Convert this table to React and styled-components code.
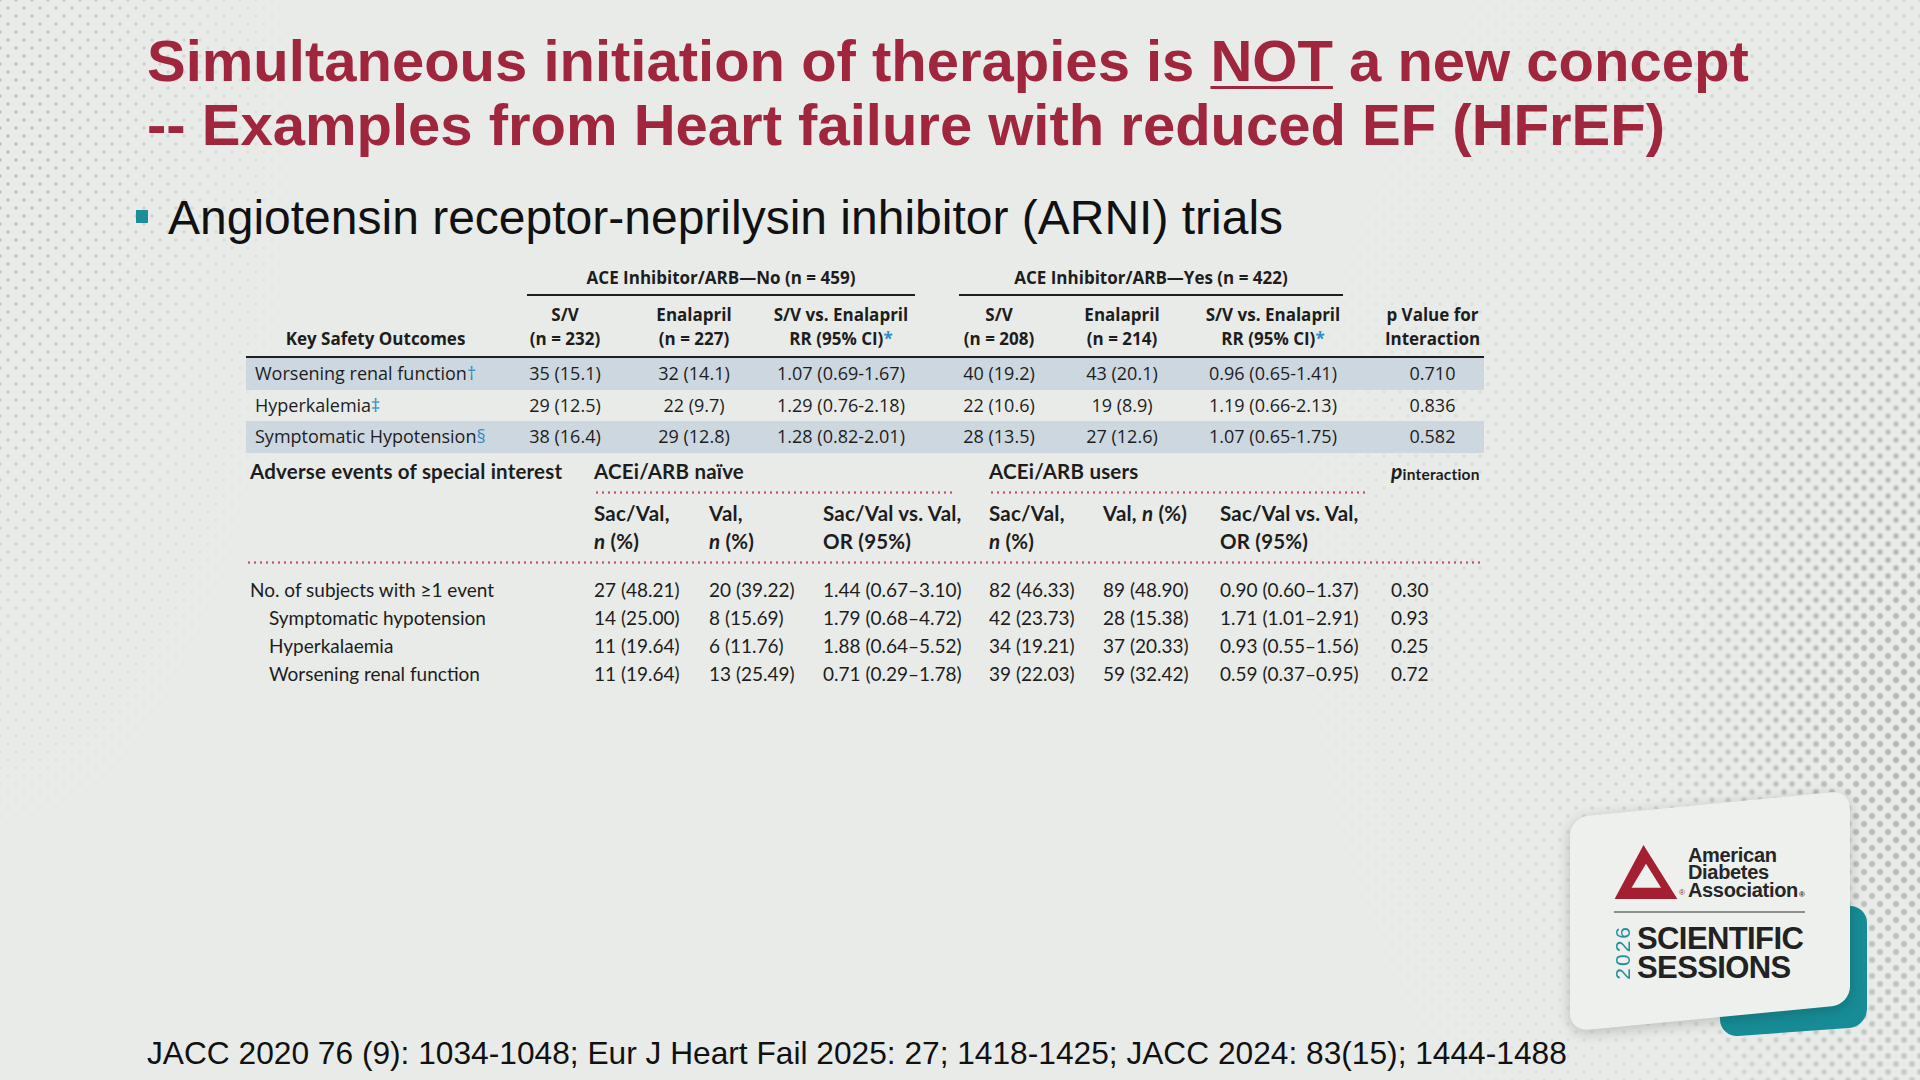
import React from 'react'
import styled, { createGlobalStyle } from 'styled-components'

const Global = createGlobalStyle`
  html, body {
    margin: 0;
    padding: 0;
    background: #e8ebe8;
  }
`

const lattice = (color, r) => `
  radial-gradient(circle, ${color} ${r}px, transparent ${r + 0.8}px),
  radial-gradient(circle, ${color} ${r}px, transparent ${r + 0.8}px)`

const Slide = styled.div`
  position: relative;
  width: 1920px;
  height: 1080px;
  overflow: hidden;
  background: #e8ebe8;
  font-family: "Liberation Sans", Arial, sans-serif;
`

const Halftone = styled.div`
  position: absolute;
  inset: 0;
  pointer-events: none;
  background-image: ${({ $dot, $r }) => lattice($dot, $r)};
  background-size: 16px 16px;
  background-position: 0 0, 8px 8px;
  mask-image: ${({ $mask }) => $mask};
  -webkit-mask-image: ${({ $mask }) => $mask};
`

const Content = styled.main`
  position: relative;
  z-index: 1;
  box-sizing: border-box;
  height: 100%;
  padding: 29px 0 7px 147px;
  display: flex;
  flex-direction: column;
`

const Title = styled.h1`
  margin: 0;
  font-weight: 700;
  font-size: 58px;
  line-height: 64px;
  color: #a0263e;
`

const Underlined = styled.span`
  text-decoration: underline;
  text-decoration-thickness: 3px;
  text-underline-offset: 5px;
`

const Bullet = styled.div`
  display: flex;
  align-items: center;
  gap: 20px;
  margin: 33px 0 0 -11px;
  font-size: 48px;
  line-height: 56px;
  color: #111;
`

const Square = styled.span`
  flex: none;
  width: 12px;
  height: 13px;
  margin-top: -4px;
  background: #1b8e99;
`

/* ---- safety table (top) ---- */

const T1_COLS = '259px 120px 138px 156px 160px 86px 216px 103px'

const SafetyTable = styled.section`
  margin: 19px 0 0 99px;
  width: 1238px;
  font-family: "Open Sans", "Liberation Sans", sans-serif;
  color: #1d1d1d;
`

const T1Row = styled.div`
  display: grid;
  grid-template-columns: ${T1_COLS};
  background: ${({ $shade }) => ($shade ? '#cdd7df' : 'transparent')};
`

const HeadRow = styled(T1Row)`
  border-bottom: 2px solid #1f1f1f;
`

const GroupHead = styled.div`
  grid-column: ${({ $col }) => $col} / span 3;
  margin: 0 ${({ $r }) => $r}px 0 ${({ $l }) => $l}px;
  padding: 2px 0 5px;
  border-bottom: 2px solid #1f1f1f;
  text-align: center;
  font-weight: 700;
  font-size: 17px;
  line-height: 22px;
`

const HeadCell = styled.div`
  align-self: end;
  padding: 7px 0 5px;
  text-align: center;
  font-weight: 700;
  font-size: 17px;
  line-height: 24px;
  white-space: nowrap;
`

const Cell = styled.div`
  padding-left: ${({ $left }) => ($left ? '9px' : '0')};
  text-align: ${({ $left }) => ($left ? 'left' : 'center')};
  font-size: 18px;
  line-height: 31.5px;
  white-space: nowrap;
`

const Mark = styled.span`
  color: #2f8cc4;
`

/* ---- adverse events table (bottom) ---- */

const T2_COLS = '348px 115px 114px 166px 114px 117px 171px 93px'
const dots = 'radial-gradient(circle, #c4516a 0.9px, transparent 1.5px)'

const EventsTable = styled.section`
  margin-left: 99px;
  width: 1238px;
  font-family: Lato, "Liberation Sans", sans-serif;
  font-size: 19px;
  color: #1d1d1d;
`

const T2Row = styled.div`
  display: grid;
  grid-template-columns: ${T2_COLS};
  padding: ${({ $pad }) => $pad || '0'};
  line-height: 28px;
  white-space: nowrap;
  ${({ $rule }) => $rule && `background: ${dots} left bottom / 6px 3px repeat-x;`}
`

const Body2 = styled.div`
  padding-top: 12px;
`

const GroupLabel = styled.div`
  grid-column: ${({ $col }) => $col} / span ${({ $span }) => $span || 1};
  margin-right: ${({ $r }) => $r || 0}px;
  padding: 6px 0 8px ${({ $pad }) => $pad || 0}px;
  line-height: 24px;
  font-size: 20.5px;
  font-weight: 700;
  letter-spacing: 0.2px;
  ${({ $rule }) => $rule && `background: ${dots} left bottom / 6px 3px repeat-x;`}
`

const SubHead = styled.div`
  grid-column: ${({ $col }) => $col};
  font-size: 20.5px;
  font-weight: 700;
  letter-spacing: 0.2px;
`

const PInter = styled.span`
  font-style: italic;
  font-size: 21px;
  & > sub {
    font-style: normal;
    font-size: 15.5px;
    vertical-align: -1px;
  }
`

const Cell2 = styled.div`
  padding-left: ${({ $indent }) => ($indent ? 23 : 4)}px;
`

const Val2 = styled.div``

/* ---- references ---- */

const Refs = styled.footer`
  margin-top: auto;
  font-size: 31.7px;
  line-height: 40px;
  color: #111;
`

/* ---- ADA badge ---- */

const Badge = styled.aside`
  position: absolute;
  left: 1570px;
  top: 790px;
  width: 280px;
  height: 242px;
  z-index: 2;
  &::before {
    content: '';
    position: absolute;
    left: 150px;
    top: 120px;
    width: 147px;
    height: 122px;
    border-radius: 18px;
    background: #178c96;
    transform: skewY(-4deg);
  }
  &::after {
    content: '';
    position: absolute;
    left: 0;
    top: 14px;
    width: 280px;
    height: 214px;
    border-radius: 18px;
    background: #eef0ee;
    transform: skewY(-5.5deg);
    box-shadow: 0 3px 14px rgba(0, 0, 0, 0.2);
  }
`

const BadgeBody = styled.div`
  position: relative;
  z-index: 1;
  width: 191px;
  padding: 55px 0 0 44px;
`

const AdaRow = styled.div`
  display: flex;
  align-items: flex-end;
`

const Reg = styled.span`
  font-size: 8px;
  line-height: 8px;
  color: ${({ $red }) => ($red ? '#a51f33' : '#262626')};
  margin: 0 ${({ $gap }) => $gap || 0}px 2px 1px;
`

const AdaName = styled.div`
  font-weight: 700;
  font-size: 20px;
  line-height: 17.5px;
  letter-spacing: -0.3px;
  color: #262626;
`

const Divider = styled.div`
  height: 1.5px;
  margin-top: 12px;
  background: #8e8e8e;
`

const SessionsRow = styled.div`
  display: flex;
  align-items: center;
  gap: 5px;
  margin-top: 11px;
`

const Year = styled.span`
  writing-mode: vertical-rl;
  transform: rotate(180deg);
  font-size: 21px;
  letter-spacing: 2px;
  line-height: 18px;
  color: #23919b;
`

const Sessions = styled.div`
  font-weight: 700;
  font-size: 31px;
  line-height: 29px;
  letter-spacing: -0.6px;
  color: #222;
`

const AdaMark = () => (
  <svg width="64" height="54" viewBox="0 0 100 86">
    <path d="M0 86 L46 0 L100 86 Z M50 30 L27 68 L74 68 Z" fill="#a51f33" fillRule="evenodd" />
  </svg>
)

const safetyRows = [
  ['Worsening renal function', '†', '35 (15.1)', '32 (14.1)', '1.07 (0.69-1.67)', '40 (19.2)', '43 (20.1)', '0.96 (0.65-1.41)', '0.710'],
  ['Hyperkalemia', '‡', '29 (12.5)', '22 (9.7)', '1.29 (0.76-2.18)', '22 (10.6)', '19 (8.9)', '1.19 (0.66-2.13)', '0.836'],
  ['Symptomatic Hypotension', '§', '38 (16.4)', '29 (12.8)', '1.28 (0.82-2.01)', '28 (13.5)', '27 (12.6)', '1.07 (0.65-1.75)', '0.582'],
]

const eventRows = [
  ['No. of subjects with ≥1 event', false, '27 (48.21)', '20 (39.22)', '1.44 (0.67–3.10)', '82 (46.33)', '89 (48.90)', '0.90 (0.60–1.37)', '0.30'],
  ['Symptomatic hypotension', true, '14 (25.00)', '8 (15.69)', '1.79 (0.68–4.72)', '42 (23.73)', '28 (15.38)', '1.71 (1.01–2.91)', '0.93'],
  ['Hyperkalaemia', true, '11 (19.64)', '6 (11.76)', '1.88 (0.64–5.52)', '34 (19.21)', '37 (20.33)', '0.93 (0.55–1.56)', '0.25'],
  ['Worsening renal function', true, '11 (19.64)', '13 (25.49)', '0.71 (0.29–1.78)', '39 (22.03)', '59 (32.42)', '0.59 (0.37–0.95)', '0.72'],
]

export default function App() {
  return (
    <Slide>
      <Global />
      <Halftone
        $dot="rgba(140,146,143,0.5)"
        $r={1.3}
        $mask="radial-gradient(ellipse 300px 700px at 0px 150px, #000 0%, rgba(0,0,0,0.55) 50%, transparent 100%)"
      />
      <Halftone
        $dot="rgba(140,146,143,0.45)"
        $r={1.4}
        $mask="radial-gradient(ellipse 800px 1000px at 1960px 560px, #000 0%, rgba(0,0,0,0.6) 45%, transparent 85%)"
      />
      <Halftone
        $dot="rgba(150,155,152,0.55)"
        $r={3}
        $mask="radial-gradient(ellipse 300px 560px at 1940px 760px, #000 0%, rgba(0,0,0,0.5) 50%, transparent 100%)"
      />

      <Content>
        <Title>
          Simultaneous initiation of therapies is <Underlined>NOT</Underlined> a new concept
          <br />
          -- Examples from Heart failure with reduced EF (HFrEF)
        </Title>

        <Bullet>
          <Square />
          Angiotensin receptor-neprilysin inhibitor (ARNI) trials
        </Bullet>

        <SafetyTable>
          <T1Row>
            <GroupHead $col={2} $l={22} $r={4}>ACE Inhibitor/ARB—No (n = 459)</GroupHead>
            <GroupHead $col={5} $l={40} $r={38}>ACE Inhibitor/ARB—Yes (n = 422)</GroupHead>
          </T1Row>
          <HeadRow>
            <HeadCell>Key Safety Outcomes</HeadCell>
            <HeadCell>S/V<br />(n = 232)</HeadCell>
            <HeadCell>Enalapril<br />(n = 227)</HeadCell>
            <HeadCell>S/V vs. Enalapril<br />RR (95% CI)<Mark>*</Mark></HeadCell>
            <HeadCell>S/V<br />(n = 208)</HeadCell>
            <HeadCell>Enalapril<br />(n = 214)</HeadCell>
            <HeadCell>S/V vs. Enalapril<br />RR (95% CI)<Mark>*</Mark></HeadCell>
            <HeadCell>p Value for<br />Interaction</HeadCell>
          </HeadRow>
          {safetyRows.map(([label, mark, ...vals], i) => (
            <T1Row key={label} $shade={i % 2 === 0}>
              <Cell $left>{label}<Mark>{mark}</Mark></Cell>
              {vals.map((v, j) => <Cell key={j}>{v}</Cell>)}
            </T1Row>
          ))}
        </SafetyTable>

        <EventsTable>
          <T2Row>
            <GroupLabel $col={1} $pad={4}>Adverse events of special interest</GroupLabel>
            <GroupLabel $col={2} $span={3} $r={34} $rule>ACEi/ARB naïve</GroupLabel>
            <GroupLabel $col={5} $span={3} $r={22} $rule>ACEi/ARB users</GroupLabel>
            <GroupLabel $col={8}><PInter>p<sub>interaction</sub></PInter></GroupLabel>
          </T2Row>
          <T2Row $pad="5px 0 9px" $rule>
            <SubHead $col={2}>Sac/Val,<br /><i>n</i> (%)</SubHead>
            <SubHead $col={3}>Val,<br /><i>n</i> (%)</SubHead>
            <SubHead $col={4}>Sac/Val vs. Val,<br />OR (95%)</SubHead>
            <SubHead $col={5}>Sac/Val,<br /><i>n</i> (%)</SubHead>
            <SubHead $col={6}>Val, <i>n</i> (%)</SubHead>
            <SubHead $col={7}>Sac/Val vs. Val,<br />OR (95%)</SubHead>
          </T2Row>
          <Body2>
            {eventRows.map(([label, indent, ...vals]) => (
              <T2Row key={label}>
                <Cell2 $indent={indent}>{label}</Cell2>
                {vals.map((v, j) => <Val2 key={j}>{v}</Val2>)}
              </T2Row>
            ))}
          </Body2>
        </EventsTable>

        <Refs>
          JACC 2020 76 (9): 1034-1048; Eur J Heart Fail 2025: 27; 1418-1425; JACC 2024: 83(15); 1444-1488
        </Refs>
      </Content>

      <Badge>
        <BadgeBody>
          <AdaRow>
            <AdaMark />
            <Reg $red $gap={3}>®</Reg>
            <AdaName>
              American<br />Diabetes<br />Association<Reg>®</Reg>
            </AdaName>
          </AdaRow>
          <Divider />
          <SessionsRow>
            <Year>2026</Year>
            <Sessions>SCIENTIFIC<br />SESSIONS</Sessions>
          </SessionsRow>
        </BadgeBody>
      </Badge>
    </Slide>
  )
}
